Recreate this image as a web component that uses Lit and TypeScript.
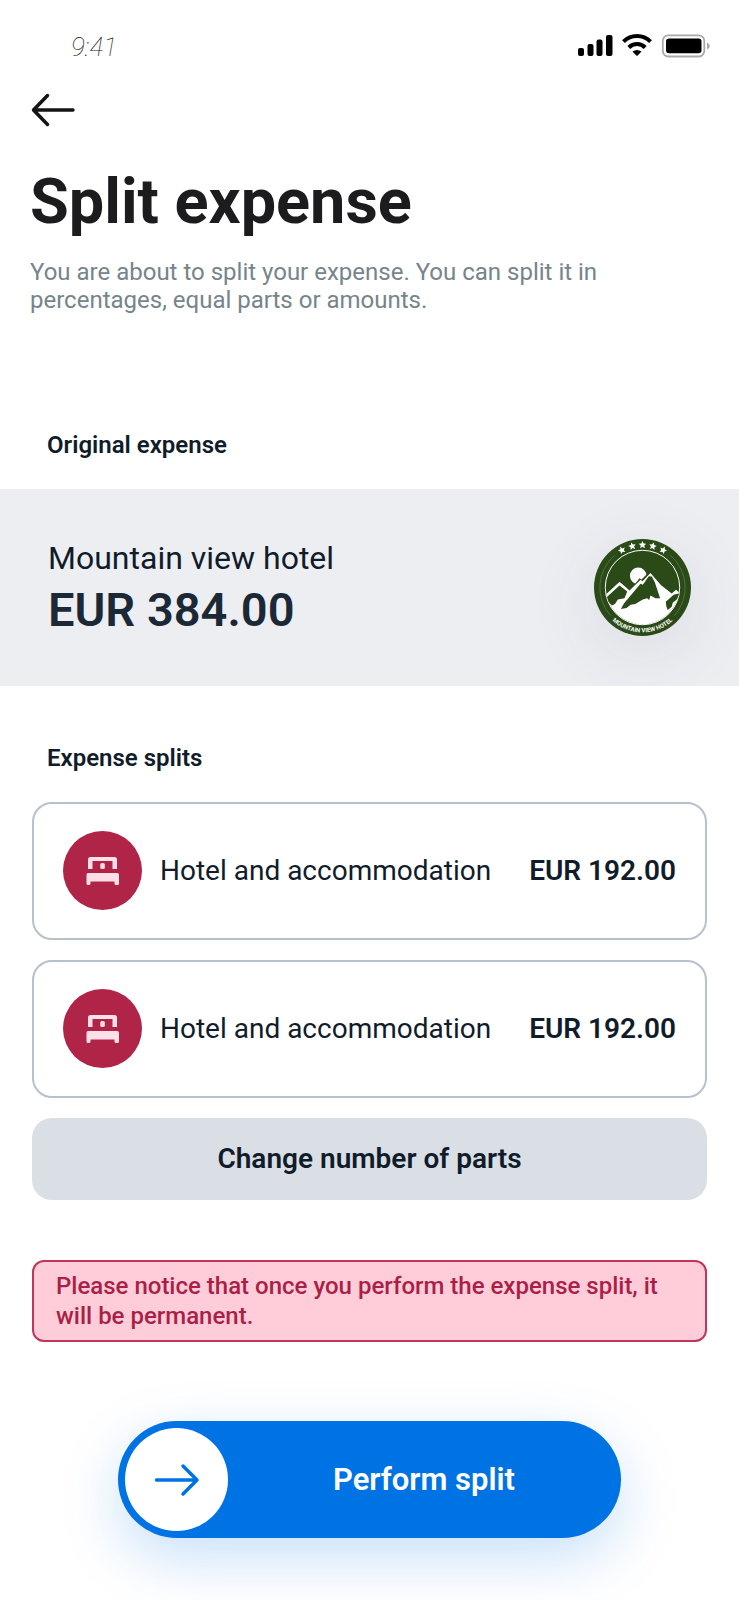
import { LitElement, html, css, svg } from "lit";
import { customElement, property, state } from "lit/decorators.js";

interface Split {
  category: string;
  amount: number;
}

const euro = (value: number) => `EUR ${value.toFixed(2)}`;

@customElement("status-bar")
class StatusBar extends LitElement {
  static styles = css`
    :host {
      display: flex;
      justify-content: space-between;
      align-items: center;
      height: 32px;
      padding: 0 29px 0 71px;
    }
    .time {
      font-size: 26px;
      line-height: 32px;
      font-weight: 100;
      font-style: italic;
      color: #111;
    }
    .icons {
      display: flex;
      align-items: center;
      gap: 9px;
      margin-bottom: 2px;
    }
    svg {
      display: block;
    }
  `;

  render() {
    return html`
      <span class="time">9:41</span>
      <div class="icons">
        <svg width="35" height="24" viewBox="0 0 35 24" aria-label="Signal">
          <rect x="0" y="14" width="6" height="8" rx="2" />
          <rect x="9.500" y="10" width="6" height="12" rx="2" />
          <rect x="18.500" y="5.500" width="6" height="16.500" rx="2" />
          <rect x="28" y="1" width="6.500" height="21" rx="2" />
        </svg>
        <svg width="30" height="24" viewBox="0 0 30 24" aria-label="Wi-Fi">
          <g fill="none" stroke="#000" stroke-width="4">
            <path d="M1.500 7.700A19 19 0 0 1 28.500 7.700" />
            <path d="M6.800 13.500A11.600 11.600 0 0 1 23.200 13.500" />
          </g>
          <path d="M10.500 17.500Q15 14.500 19.500 17.500L15.700 21.500Q15 22.100 14.300 21.500Z" />
        </svg>
        <svg width="49" height="24" viewBox="0 0 49 24" aria-label="Battery">
          <rect x="1.800" y="1.300" width="41.500" height="21.200" rx="5.500" fill="none" stroke="#a9a9a9" stroke-width="1.800" />
          <rect x="5" y="4.500" width="35.500" height="14.800" rx="3" />
          <path d="M46 8.500Q48.800 9.500 48.800 12T46 15.500Z" fill="#a9a9a9" />
        </svg>
      </div>
    `;
  }
}

@customElement("hotel-logo")
class HotelLogo extends LitElement {
  static styles = css`
    :host {
      display: block;
      border-radius: 50%;
      box-shadow: 0 16px 60px 16px rgba(60, 70, 90, 0.06);
    }
    svg {
      display: block;
      width: 97px;
      height: 97px;
    }
    text {
      font: 700 18px Roboto, sans-serif;
      fill: #fff;
    }
  `;

  render() {
    const stars = [-62, -31, 0, 31, 62];
    return html`
      <svg viewBox="0 0 292 292" role="img" aria-label="Mountain view hotel logo">
        <defs>
          <path id="ring" d="M11 146A135 135 0 0 0 281 146" />
          <clipPath id="disc"><circle cx="146" cy="146" r="111" /></clipPath>
        </defs>
        <circle cx="146" cy="146" r="146" fill="#2a4a17" />
        <g fill="none" stroke="#7c8f70" stroke-width="1.500">
          <path d="M62 49A128 128 0 0 0 50 231" />
          <path d="M230 49A128 128 0 0 1 242 231" />
        </g>
        <circle cx="146" cy="146" r="112" fill="none" stroke="#fff" stroke-width="3" />
        ${stars.map(
          (x) => svg`<path fill="#fff" transform="translate(${146 + x} ${18 + (x * x) / 245}) rotate(${x / 2.4})"
            d="M0-12L3.400-4.400L11.400-3.700L5.400 1.700L7.100 9.700L0 5.600L-7.100 9.700L-5.400 1.700L-11.400-3.700L-3.400-4.400Z" />`
        )}
        <g clip-path="url(#disc)">
          <circle cx="133" cy="111" r="25" fill="#fff" />
          <path fill="#2a4a17" d="M104 160L137 118L143 122L168 97L172 140Z" />
          <path
            fill="#fff"
            d="M28 174L77 129L107 155L140 123L146 127L170 102L202 139L234 164L247 153L264 168V270H28Z"
          />
          <path
            fill="#2a4a17"
            d="M36 177L77 140L100 158L92 178L72 182L63 196L54 200L42 188Z"
          />
          <path
            fill="#2a4a17"
            d="M81 211L90 194L140 135L147 138L165 112L174 113L183 130L199 178L185 178L170 170L166 184L160 178L147 182L124 196L110 198L98 208Z"
          />
          <path
            fill="#2a4a17"
            d="M216 189L240 168L258 163L250 181L237 192L234 204L222 214L218 204Z"
          />
        </g>
        <text text-anchor="middle"><textPath href="#ring" startOffset="50%">MOUNTAIN VIEW HOTEL</textPath></text>
      </svg>
    `;
  }
}

@customElement("split-row")
class SplitRow extends LitElement {
  @property() category = "";
  @property({ type: Number }) amount = 0;

  static styles = css`
    :host {
      display: flex;
      align-items: center;
      gap: 18px;
      box-sizing: border-box;
      padding: 27px 29px 28px;
      border: 2px solid #b7c0cc;
      border-radius: 20px;
      font-size: 28px;
      line-height: 36px;
      color: #111c2b;
    }
    .badge {
      flex: none;
      display: grid;
      place-items: center;
      width: 79px;
      height: 79px;
      border-radius: 50%;
      background: #b02448;
    }
    .category {
      flex: 1;
    }
    .amount {
      font-weight: 600;
      white-space: nowrap;
    }
  `;

  render() {
    return html`
      <span class="badge">
        <svg width="34" height="30" viewBox="0 0 34 30" fill="#ffe0e8" aria-hidden="true">
          <path d="M4.500 1H28.500Q31 1 31 3.500V13H26.500V5H6.500V13H2V3.500Q2 1 4.500 1Z" />
          <rect x="14.300" y="7" width="4.500" height="6" rx="1.500" />
          <path d="M2 17H31Q33 17 33 19V27.500Q33 29 31.500 29H30Q28.500 29 28.500 27.500V25.500H4.500V27.500Q4.500 29 3 29H2Q0.500 29 0.500 27.500V19Q0.500 17 2 17Z" />
        </svg>
      </span>
      <span class="category">${this.category}</span>
      <span class="amount">${euro(this.amount)}</span>
    `;
  }
}

@customElement("app-root")
class AppRoot extends LitElement {
  @state() private splits: Split[] = [
    { category: "Hotel and accommodation", amount: 192 },
    { category: "Hotel and accommodation", amount: 192 },
  ];

  static styles = css`
    :host {
      display: block;
      box-sizing: border-box;
      min-height: 100vh;
      padding-top: 31px;
      overflow: hidden;
      background: #fff;
      color: #111c2b;
      font-family: Roboto, sans-serif;
    }
    button {
      border: 0;
      font-family: inherit;
      cursor: pointer;
    }
    header {
      padding: 29px 30px 0;
    }
    .back {
      display: block;
      padding: 0;
      background: none;
    }
    svg {
      display: block;
    }
    h1 {
      margin: 36px 0 0;
      font-size: 63px;
      line-height: 76px;
      font-weight: 700;
      color: #1c1c1e;
    }
    .intro {
      margin: 18px 0 0;
      max-width: 600px;
      font-size: 24px;
      line-height: 28px;
      color: #76848b;
    }
    h2 {
      margin: 0;
      padding: 0 47px;
      font-size: 24px;
      line-height: 28px;
      font-weight: 600;
    }
    .original {
      margin-top: 117px;
    }
    .expense {
      display: flex;
      justify-content: space-between;
      align-items: center;
      margin-top: 30px;
      padding: 46px 48px 47px;
      overflow: hidden;
      background: #edeef2;
    }
    .merchant {
      margin: 0;
      font-size: 32px;
      line-height: 46px;
    }
    .total {
      margin: 0;
      font-size: 47px;
      line-height: 58px;
      font-weight: 600;
      color: #1b2936;
    }
    .splits {
      margin-top: 58px;
    }
    .list {
      display: flex;
      flex-direction: column;
      gap: 20px;
      margin-top: 30px;
      padding: 0 32px;
    }
    .change {
      padding: 23px 24px;
      border-radius: 20px;
      background: #dadfe5;
      color: #111c2b;
      font-size: 28px;
      line-height: 36px;
      font-weight: 600;
    }
    .notice {
      margin: 60px 32px 0;
      padding: 9px 24px 9px 22px;
      border: 2px solid #c0355a;
      border-radius: 12px;
      background: #fecdd9;
      color: #ab1f46;
      font-size: 24px;
      line-height: 30px;
      font-weight: 500;
    }
    .perform {
      display: flex;
      align-items: center;
      width: 68%;
      margin: 79px auto 61px;
      padding: 7px;
      border-radius: 60px;
      background: #0073e4;
      box-shadow: 0 20px 60px rgba(0, 115, 228, 0.22);
      color: #fff;
      font-size: 31px;
      line-height: 40px;
      font-weight: 600;
    }
    .knob {
      flex: none;
      display: grid;
      place-items: center;
      width: 103px;
      height: 103px;
      border-radius: 50%;
      background: #fff;
    }
    .label {
      flex: 1;
      padding-left: 6px;
    }
  `;

  private get total() {
    return this.splits.reduce((sum, split) => sum + split.amount, 0);
  }

  render() {
    return html`
      <status-bar></status-bar>
      <header>
        <button class="back" aria-label="Back">
          <svg width="46" height="36" viewBox="0 0 46 36" fill="none" stroke="#141414" stroke-width="3.500" stroke-linecap="round" stroke-linejoin="round">
            <path d="M43 18H4M17.500 3.500L3.500 18L17.500 32.500" />
          </svg>
        </button>
        <h1>Split expense</h1>
        <p class="intro">You are about to split your expense. You can split it in percentages, equal parts or amounts.</p>
      </header>
      <section class="original">
        <h2>Original expense</h2>
        <div class="expense">
          <div>
            <p class="merchant">Mountain view hotel</p>
            <p class="total">${euro(this.total)}</p>
          </div>
          <hotel-logo></hotel-logo>
        </div>
      </section>
      <section class="splits">
        <h2>Expense splits</h2>
        <div class="list">
          ${this.splits.map(
            (split) => html`<split-row .category=${split.category} .amount=${split.amount}></split-row>`
          )}
          <button class="change">Change number of parts</button>
        </div>
      </section>
      <p class="notice">Please notice that once you perform the expense split, it will be permanent.</p>
      <button class="perform">
        <span class="knob">
          <svg width="46" height="36" viewBox="0 0 46 36" fill="none" stroke="#0073e4" stroke-width="3.500" stroke-linecap="round" stroke-linejoin="round">
            <path d="M2.500 18H43M29 4L43 18L29 32" />
          </svg>
        </span>
        <span class="label">Perform split</span>
      </button>
    `;
  }
}
